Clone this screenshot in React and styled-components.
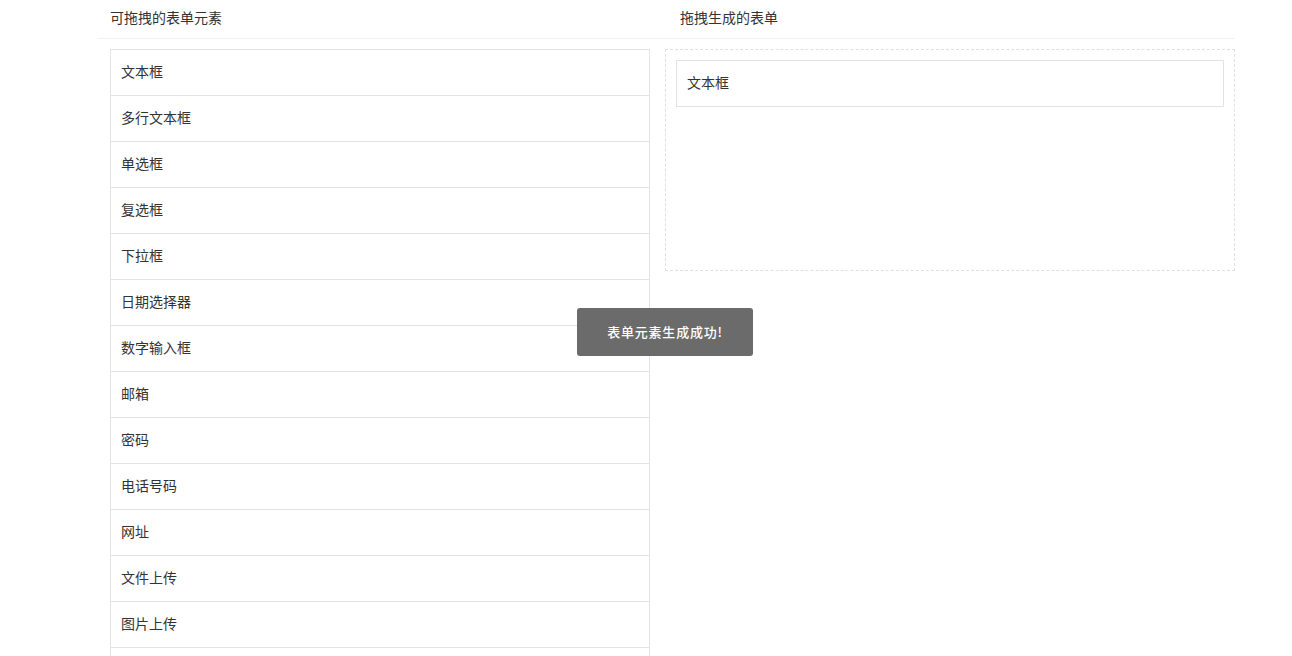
import React from "react";
import styled, { createGlobalStyle } from "styled-components";

const Global = createGlobalStyle`
  html, body { margin: 0; padding: 0; background: #fff; }
  body { font-family: "Noto Sans CJK SC", "Microsoft YaHei", sans-serif; color: #333; font-size: 14px; }
  * { box-sizing: border-box; }
`;

const Page = styled.div`
  width: 1137px;
  margin-left: 98px;
  height: 656px;
  overflow: hidden;
`;

const Header = styled.div`
  display: grid;
  grid-template-columns: 582px 1fr;
  height: 39px;
  border-bottom: 1px solid #f2f2f2;
`;

const Title = styled.div`
  padding-left: ${(p) => p.$indent}px;
  line-height: 34px;
  font-size: 14px;
  color: #333;
`;

const Body = styled.div`
  display: grid;
  grid-template-columns: 540px 570px;
  column-gap: 15px;
  padding: 10px 0 0 12px;
`;

const List = styled.div`
  display: flex;
  flex-direction: column;
`;

const Item = styled.div`
  height: 47px;
  margin-bottom: -1px;
  border: 1px solid #e3e3e3;
  padding: 0 0 3px 10px;
  display: flex;
  align-items: center;
  font-size: 14px;
  color: #333;
  background: #fff;
`;

const Drop = styled.div`
  height: 222px;
  border: 1px dashed #e0e0e0;
  padding: 10px;
`;

const Toast = styled.div`
  position: absolute;
  left: 577px;
  top: 308px;
  width: 176px;
  height: 48px;
  padding-bottom: 2px;
  border-radius: 3px;
  background: #6b6b6b;
  color: #fff;
  font-size: 13px;
  letter-spacing: 0.8px;
  font-weight: 500;
  display: flex;
  align-items: center;
  justify-content: center;
`;

const items = [
  "文本框",
  "多行文本框",
  "单选框",
  "复选框",
  "下拉框",
  "日期选择器",
  "数字输入框",
  "邮箱",
  "密码",
  "电话号码",
  "网址",
  "文件上传",
  "图片上传",
  "颜色选择器",
];

export default function App() {
  return (
    <>
      <Global />
      <Page>
        <Header>
          <Title $indent={12}>可拖拽的表单元素</Title>
          <Title $indent={0}>拖拽生成的表单</Title>
        </Header>
        <Body>
          <List>
            {items.map((t) => (
              <Item key={t}>{t}</Item>
            ))}
          </List>
          <Drop>
            <Item>文本框</Item>
          </Drop>
        </Body>
      </Page>
      <Toast>表单元素生成成功!</Toast>
    </>
  );
}
